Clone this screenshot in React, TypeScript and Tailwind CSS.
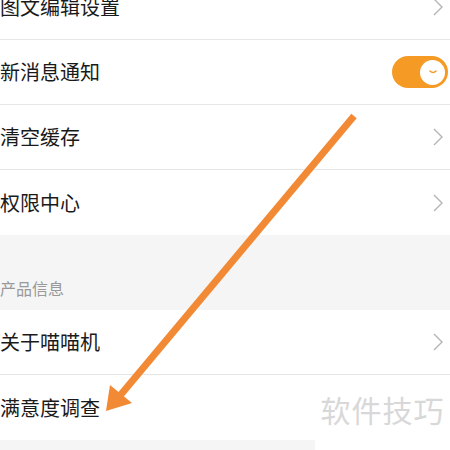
const rows = [
  { label: "图文编辑设置", kind: "chevron" },
  { label: "新消息通知", kind: "switch" },
  { label: "清空缓存", kind: "chevron" },
  { label: "权限中心", kind: "chevron" },
];

const rows2 = [
  { label: "关于喵喵机", kind: "chevron" },
  { label: "满意度调查", kind: "none" },
];

function Chevron() {
  return (
    <svg width="12" height="20" viewBox="0 0 12 20" className="mr-[6px]">
      <polyline points="2,2 10,10 2,18" fill="none" stroke="#b5b5b5" strokeWidth="1.4" />
    </svg>
  );
}

function Toggle() {
  return (
    <div className="w-[56px] h-[32px] rounded-full bg-[#f59b25] flex items-center justify-end pr-[3px] mr-[2px]">
      <div className="w-[25px] h-[25px] rounded-full bg-white flex items-center justify-center">
        <svg width="12" height="8" viewBox="0 0 12 8">
          <path d="M3 3 Q6 6 9 3" fill="none" stroke="#f59b25" strokeWidth="1.6" strokeLinecap="round" />
        </svg>
      </div>
    </div>
  );
}

function Row({ label, kind, last }: { label: string; kind: string; last?: boolean }) {
  return (
    <div className={`h-[65px] flex items-center justify-between bg-white ${last ? "" : "border-b border-[#e6e6e6]"}`}>
      <span className="text-[20px] text-[#1a1a1a] leading-none">{label}</span>
      {kind === "chevron" && <Chevron />}
      {kind === "switch" && <Toggle />}
    </div>
  );
}

export default function App() {
  return (
    <div
      className="relative w-[450px] h-[450px] overflow-hidden bg-white"
      style={{ fontFamily: '"Noto Sans CJK SC", "Noto Sans", sans-serif' }}
    >
      <div className="-mt-[25px]">
        {rows.map((r, i) => (
          <Row key={r.label} label={r.label} kind={r.kind} last={i === rows.length - 1} />
        ))}
        <div className="h-[75px] bg-[#f5f5f5] flex items-end pb-[14px]">
          <span className="text-[16px] text-[#999] leading-none">产品信息</span>
        </div>
        <Row label={rows2[0].label} kind={rows2[0].kind} />
        <Row label={rows2[1].label} kind={rows2[1].kind} last />
        <div className="h-[20px] bg-[#f5f5f5]" />
      </div>

      {/* 水印 */}
      <div className="absolute right-0 bottom-0 w-[135px] h-[62px] bg-white flex items-start justify-center pt-[6px]">
        <span className="text-[30px] text-[#d8d8d8] leading-none tracking-[1px]">软件技巧</span>
      </div>

      {/* 箭头 */}
      <svg className="absolute inset-0" width="450" height="450" viewBox="0 0 450 450">
        <line x1="354" y1="116" x2="118" y2="398" stroke="#f28a35" strokeWidth="7" strokeLinecap="butt" />
        <polygon points="106,411 110,385 132,403" fill="#f28a35" />
      </svg>
    </div>
  );
}
